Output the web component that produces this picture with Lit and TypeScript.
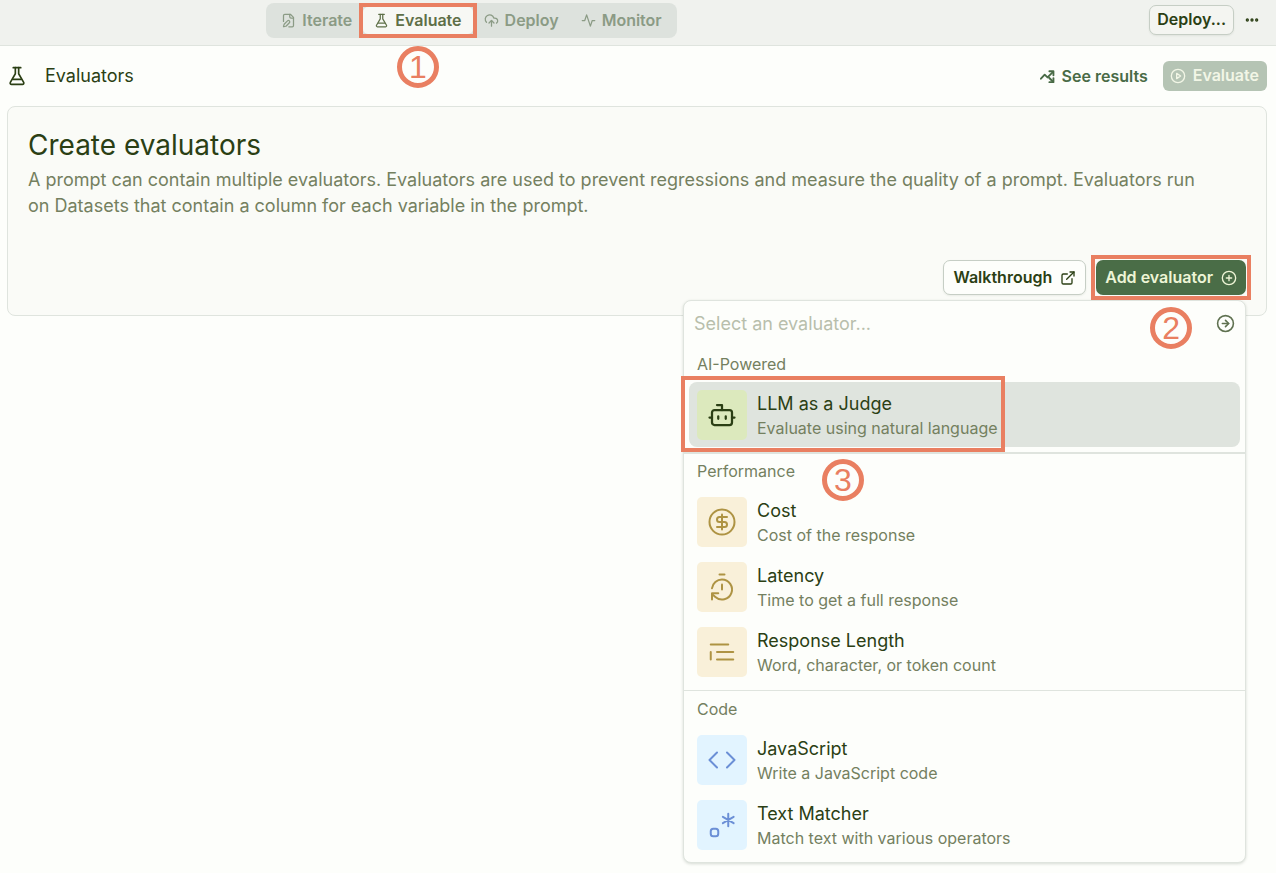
import { LitElement, html, css, svg, nothing } from "lit";
import { customElement, property } from "lit/decorators.js";
import { classMap } from "lit/directives/class-map.js";

const ICONS: Record<string, unknown> = {
  filePen: svg`<path d="M12.5 22H18a2 2 0 0 0 2-2V7l-5-5H6a2 2 0 0 0-2 2v9.5"/><path d="M14 2v4a2 2 0 0 0 2 2h4"/><path d="M13.4 15.6a1 1 0 1 0-3-3l-5 5a2 2 0 0 0-.5.9L4 21.4a.5.5 0 0 0 .6.6l2.9-.8a2 2 0 0 0 .9-.5z"/>`,
  flask: svg`<path d="M7.500 2h9"/><path d="M10 2v7.300L4 19.600A1.600 1.600 0 0 0 5.500 22h13a1.600 1.600 0 0 0 1.500-2.400L14 9.300V2"/><path d="M7 16h10"/>`,
  cloudUp: svg`<path d="M4 14.900A7 7 0 1 1 15.700 8h1.800a4.500 4.500 0 0 1 2.500 8.200"/><path d="M12 12v9"/><path d="m16 16-4-4-4 4"/>`,
  activity: svg`<path d="M22 12h-4l-3 9L9 3l-3 9H2"/>`,
  dots: svg`<circle cx="12" cy="12" r="1"/><circle cx="19" cy="12" r="1"/><circle cx="5" cy="12" r="1"/>`,
  split: svg`<path d="M1.500 15.500 7.500 9l4.500 4.500L20.500 5"/><path d="M15 3.500h6.500V10"/><path d="m14.500 14 6 6"/><path d="M15 21h6.500v-6.500"/>`,
  play: svg`<circle cx="12" cy="12" r="10"/><path d="m10 8 6 4-6 4V8z"/>`,
  external: svg`<path d="M15 3h6v6"/><path d="M10 14 21 3"/><path d="M18 13v6a2 2 0 0 1-2 2H5a2 2 0 0 1-2-2V8a2 2 0 0 1 2-2h6"/>`,
  plus: svg`<circle cx="12" cy="12" r="10"/><path d="M8 12h8M12 8v8"/>`,
  arrow: svg`<circle cx="12" cy="12" r="10"/><path d="M8 12h8"/><path d="m12 16 4-4-4-4"/>`,
  bot: svg`<path d="M12 8V4H8"/><rect width="16" height="12" x="4" y="8" rx="2"/><path d="M2 14h2M20 14h2M15 13v2M9 13v2"/>`,
  dollar: svg`<circle cx="12" cy="12" r="10"/><path d="M16 8h-6a2 2 0 1 0 0 4h4a2 2 0 1 1 0 4H8"/><path d="M12 18V6"/>`,
  timer: svg`<path d="M10 2h4"/><path d="M12 14v-4"/><path d="M4 13a8 8 0 0 1 8-7 8 8 0 1 1-5.300 14L4 17.600"/><path d="M9 17H4v5"/>`,
  lines: svg`<path d="M17 6H3M21 12H8M21 18H8M3 12v6"/>`,
  code: svg`<path d="m16 18 6-6-6-6M8 6l-6 6 6 6"/>`,
  regex: svg`<path d="M17 3v10M12.700 5.500l8.600 5M12.700 10.500l8.600-5"/><path d="M9 17a2 2 0 0 0-2-2H5a2 2 0 0 0-2 2v2a2 2 0 0 0 2 2h2a2 2 0 0 0 2-2z"/>`,
};

@customElement("ui-icon")
class UiIcon extends LitElement {
  @property() name = "";
  @property({ type: Number }) size = 16;
  @property({ type: Number }) weight = 2;
  static styles = css`
    :host { display: inline-flex; flex: none; }
    svg { fill: none; stroke: currentColor; stroke-linecap: round; stroke-linejoin: round; }
  `;
  render() {
    return html`<svg viewBox="0 0 24 24" width=${this.size} height=${this.size} stroke-width=${this.weight} aria-hidden="true">${ICONS[this.name]}</svg>`;
  }
}

@customElement("step-marker")
class StepMarker extends LitElement {
  @property() step = "";
  static styles = css`
    :host {
      box-sizing: border-box;
      display: flex;
      align-items: center;
      justify-content: center;
      width: 42px;
      height: 42px;
      border: 5px solid #e97f61;
      border-radius: 50%;
      color: #e97f61;
      font: 400 32px/32px "Liberation Sans", Arial, sans-serif;
      pointer-events: none;
    }
  `;
  render() {
    return html`${this.step}`;
  }
}

const TABS = [
  { label: "Iterate", icon: "filePen" },
  { label: "Evaluate", icon: "flask", active: true },
  { label: "Deploy", icon: "cloudUp" },
  { label: "Monitor", icon: "activity" },
];

const GROUPS = [
  {
    label: "AI-Powered",
    tone: "lime",
    items: [{ icon: "bot", title: "LLM as a Judge", note: "Evaluate using natural language", active: true }],
  },
  {
    label: "Performance",
    tone: "sand",
    items: [
      { icon: "dollar", title: "Cost", note: "Cost of the response" },
      { icon: "timer", title: "Latency", note: "Time to get a full response" },
      { icon: "lines", title: "Response Length", note: "Word, character, or token count" },
    ],
  },
  {
    label: "Code",
    tone: "sky",
    items: [
      { icon: "code", title: "JavaScript", note: "Write a JavaScript code" },
      { icon: "regex", title: "Text Matcher", note: "Match text with various operators" },
    ],
  },
];

@customElement("evaluator-menu")
class EvaluatorMenu extends LitElement {
  static styles = css`
    :host {
      display: block;
      box-sizing: border-box;
      width: 563px;
      max-width: 100vw;
      border: 1px solid #dfe4de;
      border-radius: 8px;
      background: #fdfefb;
      box-shadow: 0 1px 3px rgba(40, 60, 40, 0.18);
      color: #2b3f14;
    }
    .search { display: flex; align-items: center; height: 45px; padding: 0 10px; color: #5f7150; }
    .field {
      flex: 1;
      min-width: 0;
      padding: 0;
      border: 0;
      outline: 0;
      background: none;
      color: #2b3f14;
      font: 400 18px/24px var(--sans);
    }
    .field::placeholder { color: #b8beac; opacity: 1; }
    .go { display: flex; padding: 0; border: 0; background: none; color: inherit; }
    .group { padding: 0 5px 6px; border-bottom: 1px solid #dfe4de; }
    .group:first-of-type { padding-bottom: 5px; border-bottom-width: 2px; }
    .group:last-of-type { padding-bottom: 5px; border-bottom: 0; }
    .heading { margin: 0; padding: 1px 0 0 8px; color: #74805f; font: 400 16px/35px var(--sans); }
    .group:nth-of-type(2) .heading { padding-top: 0; }
    .item {
      position: relative;
      display: flex;
      align-items: center;
      gap: 10px;
      width: 100%;
      height: 65px;
      padding: 0 8px;
      border: 0;
      border-radius: 8px;
      background: none;
      color: inherit;
      text-align: left;
    }
    .item.active { background: #dfe4de; }
    .tile { display: flex; flex: none; align-items: center; justify-content: center; width: 50px; height: 50px; border-radius: 5px; }
    .lime { background: #dce9bd; color: #2b3f14; }
    .sand { background: #f9f0d9; color: #ae9343; }
    .sky { background: #e2f4ff; color: #6b8fd6; }
    .text { display: flex; flex-direction: column; padding-top: 2px; }
    .title { font: 400 18px/24px var(--sans); }
    .note { color: #74805f; font: 400 16px/24px var(--sans); }
    .frame { position: absolute; top: -6px; bottom: -5px; left: -8px; box-sizing: border-box; width: 324px; border: 4px solid #e97f61; }
    .marker { position: absolute; top: 77px; left: 133px; z-index: 1; }
  `;
  render() {
    return html`
      <div class="search">
        <input class="field" type="text" aria-label="Select an evaluator" placeholder="Select an evaluator..." />
        <button class="go" aria-label="Continue"><ui-icon name="arrow" size="19"></ui-icon></button>
      </div>
      ${GROUPS.map(
        (g) => html`<section class="group">
          <h3 class="heading">${g.label}</h3>
          ${g.items.map(
            (i: any) => html`<button class=${classMap({ item: true, active: !!i.active })}>
              <span class="tile ${g.tone}"><ui-icon name=${i.icon} size="30" weight=${i.active ? 1.8 : 1.6}></ui-icon></span>
              <span class="text"><span class="title">${i.title}</span><span class="note">${i.note}</span></span>
              ${i.active ? html`<span class="frame"></span><step-marker class="marker" step="3"></step-marker>` : nothing}
            </button>`,
          )}
        </section>`,
      )}
    `;
  }
}

@customElement("app-root")
class AppRoot extends LitElement {
  static styles = css`
    :host {
      --sans: Inter, Roboto, sans-serif;
      display: block;
      min-height: 100vh;
      background: #fdfefb;
      color: #2b3f14;
      font: 400 18px/24px var(--sans);
    }
    button, a { box-sizing: border-box; margin: 0; font: 600 16px/24px var(--sans); white-space: nowrap; }
    .topbar {
      display: grid;
      grid-template-columns: 4fr auto 9fr;
      align-items: start;
      box-sizing: border-box;
      height: 46px;
      border-bottom: 1px solid #dfe4de;
      background: #f0f2ee;
    }
    .tabs { display: flex; grid-column: 2; margin-top: 3px; padding: 4px; border-radius: 8px; background: #dde2dd; }
    .tab, .outline, .primary, .run {
      display: flex;
      align-items: center;
      padding-bottom: 2px;
    }
    .tab ui-icon, .outline ui-icon, .primary ui-icon, .run ui-icon { margin-top: 2px; }
    .tab {
      position: relative;
      gap: 6px;
      height: 27px;
      padding: 0 11px 2px;
      border: 0;
      border-radius: 5px;
      background: none;
      color: #8b9b85;
    }
    .tab.active { background: #f7f8f4; color: #5e6f47; }
    .tab .frame { position: absolute; inset: -4px; border: 4px solid #e97f61; }
    .tab .marker { position: absolute; top: 39px; left: 50%; transform: translateX(-50%); }
    .actions { display: flex; grid-column: 3; justify-content: flex-end; align-items: center; gap: 10px; padding: 5px 16px 0 0; }
    .outline {
      gap: 8px;
      height: 35px;
      padding: 0 9px 2px;
      border: 1px solid #c6cec5;
      border-radius: 7px;
      background: #fdfefb;
      box-shadow: 0 1px 2px rgba(40, 60, 40, 0.08);
      color: #2b3f14;
      text-decoration: none;
    }
    .outline.small { height: 30px; padding: 0 7px 2px; background: #f4f5f1; }
    .more { display: flex; padding: 0; border: 0; background: none; color: #2b3f14; }
    .heading { display: flex; align-items: center; gap: 18px; height: 60px; padding: 0 9px 0 7px; }
    .heading h1 { flex: 1; margin: 0; font: 400 18px/24px var(--sans); }
    .results { display: flex; align-items: center; gap: 7px; color: #496b46; text-decoration: none; }
    .run {
      gap: 7px;
      height: 30px;
      padding: 0 8px 2px 7px;
      border: 0;
      border-radius: 6px;
      background: #b5c4b4;
      color: #f2f6e6;
    }
    .links { display: flex; align-items: center; gap: 15px; }
    .card { margin: 0 9px 0 7px; padding: 20px; border: 1px solid #dfe4de; border-radius: 8px; background: #fafbf7; }
    .card h2 { margin: 0 0 4px; font: 400 28px/36px var(--sans); }
    .card p { margin: 0 0 41px; padding-right: 32px; color: #74805f; font: 400 18px/26px var(--sans); }
    .buttons { display: flex; justify-content: flex-end; gap: 10px; }
    .add { position: relative; }
    .primary {
      gap: 8px;
      height: 35px;
      padding: 0 9px 2px;
      border: 0;
      border-radius: 7px;
      background: #4a6d47;
      color: #eef5d6;
    }
    .add .frame { position: absolute; inset: -5px; z-index: 2; border: 4px solid #e97f61; pointer-events: none; }
    .add .marker { position: absolute; top: 47px; left: 54px; z-index: 2; }
    .add .menu { position: absolute; top: 40px; right: 0; z-index: 1; }
  `;
  render() {
    return html`
      <header class="topbar">
        <nav class="tabs">
          ${TABS.map(
            (t) => html`<button class=${classMap({ tab: true, active: !!t.active })}>
              <ui-icon name=${t.icon} size="15"></ui-icon>${t.label}
              ${t.active ? html`<span class="frame"></span><step-marker class="marker" step="1"></step-marker>` : nothing}
            </button>`,
          )}
        </nav>
        <div class="actions">
          <button class="outline small">Deploy...</button>
          <button class="more" aria-label="More"><ui-icon name="dots" size="16" weight="3"></ui-icon></button>
        </div>
      </header>
      <div class="heading">
        <ui-icon name="flask" size="20"></ui-icon>
        <h1>Evaluators</h1>
        <div class="links">
          <a class="results" href="#results"><ui-icon name="split" size="15" weight="3"></ui-icon>See results</a>
          <button class="run"><ui-icon name="play" size="16"></ui-icon>Evaluate</button>
        </div>
      </div>
      <main class="card">
        <h2>Create evaluators</h2>
        <p>
          A prompt can contain multiple evaluators. Evaluators are used to prevent regressions and measure the quality
          of a prompt. Evaluators run on Datasets that contain a column for each variable in the prompt.
        </p>
        <div class="buttons">
          <a class="outline" href="#walkthrough">Walkthrough<ui-icon name="external" size="16"></ui-icon></a>
          <div class="add">
            <button class="primary">Add evaluator<ui-icon name="plus" size="16"></ui-icon></button>
            <span class="frame"></span>
            <step-marker class="marker" step="2"></step-marker>
            <evaluator-menu class="menu"></evaluator-menu>
          </div>
        </div>
      </main>
    `;
  }
}
